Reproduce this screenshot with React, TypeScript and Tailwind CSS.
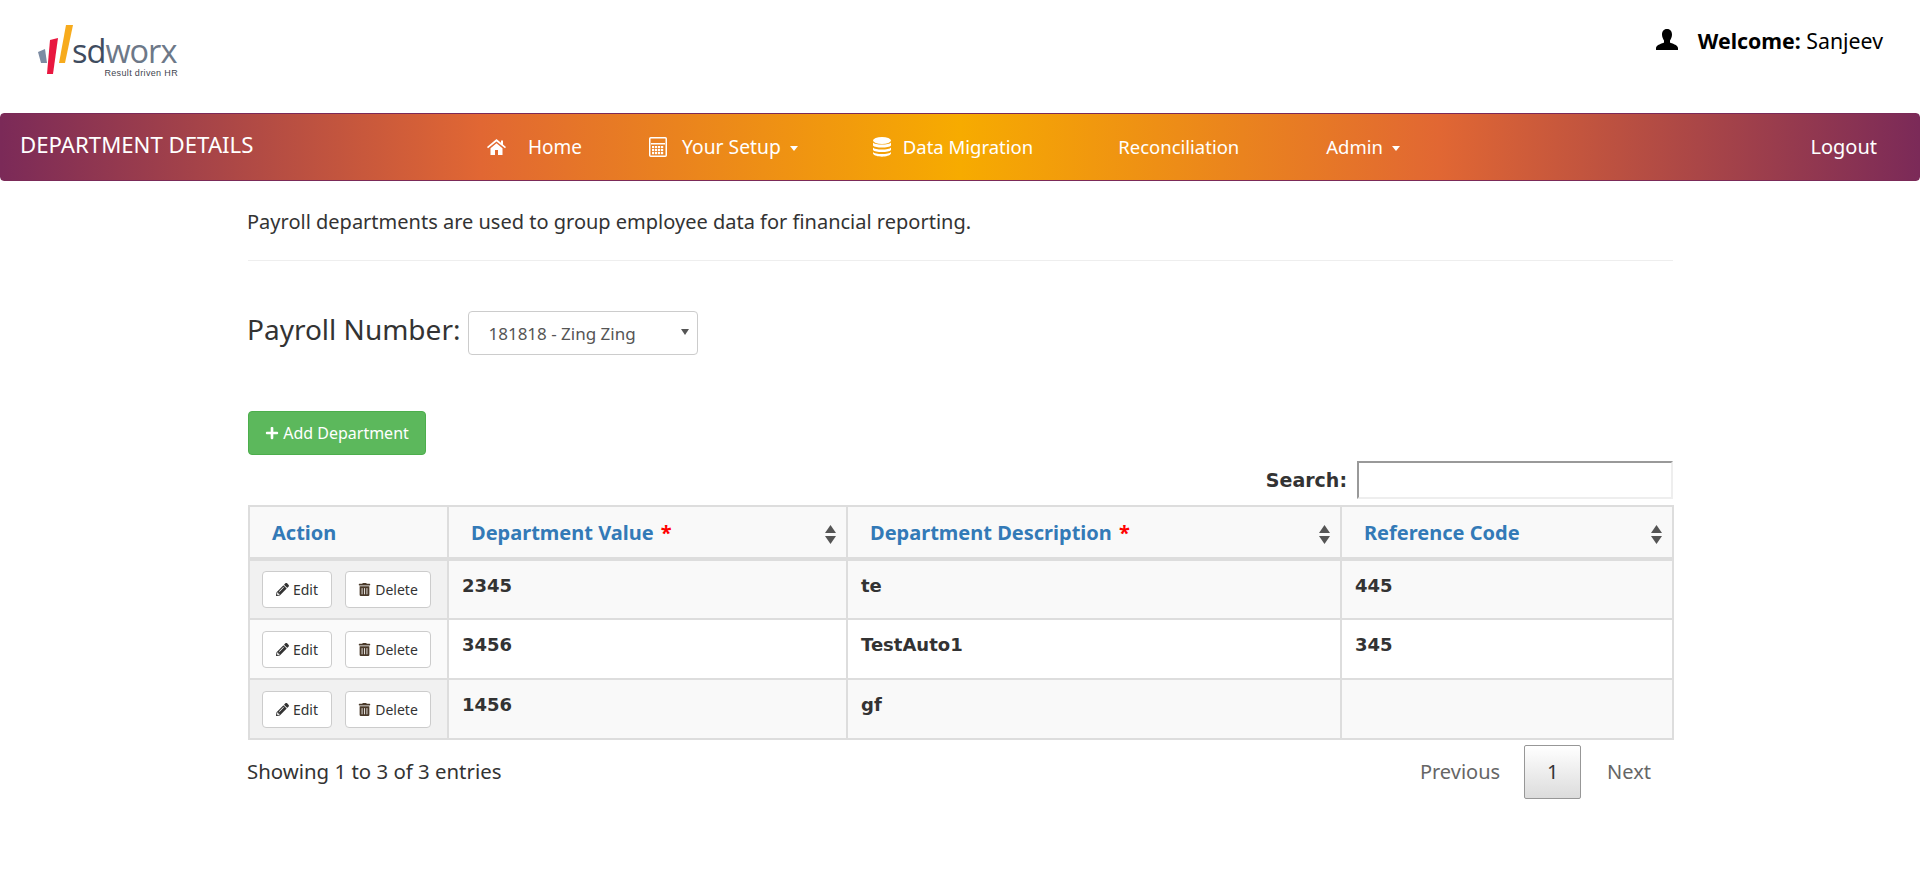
import { FaPlus, FaPencilAlt, FaTrashAlt } from 'react-icons/fa';

const rows = [
  { value: '2345', description: 'te', code: '445' },
  { value: '3456', description: 'TestAuto1', code: '345' },
  { value: '1456', description: 'gf', code: '' },
];

function Logo() {
  return (
    <div className="relative h-[52px] w-[140px]">
      <svg className="absolute left-0 top-0" width="36" height="50" viewBox="0 0 36 50">
        <polygon points="0,27 7,24 9,38 3,38" fill="#7d8ca3" />
        <polygon points="12,15 20,13 15,49 9,49" fill="#e8173f" />
        <polygon points="28,0 35,0 27,38 21,38" fill="#f7ab1d" />
      </svg>
      <span className="absolute left-[34px] top-[13px] font-['Open_Sans',sans-serif] text-[32.5px] leading-[25px] tracking-[-1px] text-[#6d7888]">
        <span className="text-[#3f4c5f]">sd</span>worx
      </span>
      <span className="absolute right-0 top-[43px] font-['Liberation_Sans',sans-serif] text-[9px] leading-[10px] tracking-[0.35px] text-[#3f4550]">
        Result driven HR
      </span>
    </div>
  );
}

function UserIcon() {
  return (
    <svg width="22" height="21" viewBox="0 0 22 21" fill="black" className="mt-[3px]">
      <path d="M11 0 C14.5 0 16 2.6 16 5.6 C16 8 15 10.2 14 11.4 V13.4 C15.5 14.4 22 15.6 22 19 V21 H0 V19 C0 15.6 6.5 14.4 8 13.4 V11.4 C7 10.2 6 8 6 5.6 C6 2.6 7.5 0 11 0 Z" />
    </svg>
  );
}

function HomeIcon() {
  return (
    <svg width="19" height="16" viewBox="0 0 19 16" fill="white" className="mr-[22px]">
      <path d="M9.5 0 L14 3.8 V1.5 H16 V5.5 L19 8 L18 9.2 L9.5 2.4 L1 9.2 L0 8 Z" />
      <path d="M3.5 9.2 L9.5 4.2 L15.5 9.2 V16 H11 V11 H8 V16 H3.5 Z" />
    </svg>
  );
}

function CalcIcon() {
  return (
    <svg width="18" height="20" viewBox="0 0 18 20" className="mr-[15px]">
      <rect x="0.75" y="0.75" width="16.5" height="18.5" rx="1" fill="none" stroke="white" strokeWidth="1.5" />
      <rect x="2" y="6" width="14" height="1.5" fill="white" />
      {[9, 12, 15].map((y) =>
        [3, 6, 9, 12].map((x) => <rect key={`${x}-${y}`} x={x} y={y} width="2.2" height="2.2" fill="white" />),
      )}
    </svg>
  );
}

function DbIcon() {
  return (
    <svg width="18" height="20" viewBox="0 0 18 20" fill="white" className="mr-[12px]">
      <ellipse cx="9" cy="3.5" rx="9" ry="3.5" />
      <path d="M0 5.5 C2 8.3 16 8.3 18 5.5 V8.5 C16 11.3 2 11.3 0 8.5 Z" />
      <path d="M0 10.5 C2 13.3 16 13.3 18 10.5 V13 C16 15.8 2 15.8 0 13 Z" />
      <path d="M0 15 C2 17.8 16 17.8 18 15 V16.5 C16 20.7 2 20.7 0 16.5 Z" />
    </svg>
  );
}

function SortIcon() {
  return (
    <svg width="11" height="19" viewBox="0 0 11 19" fill="#555555" className="absolute right-[10px] top-[18px]">
      <path d="M5.5 0 L11 8 H0 Z" />
      <path d="M0 11 H11 L5.5 19 Z" />
    </svg>
  );
}

function NavItem({ icon, label, caret, className = 'text-[18.5px]' }: { icon?: React.ReactNode; label: string; caret?: boolean; className?: string }) {
  return (
    <a className={`flex items-center whitespace-nowrap leading-[24px] text-white ${className}`}>
      {icon}
      {label}
      {caret && <span className="ml-[9px] mt-[2px] border-x-[4px] border-t-[5px] border-x-transparent border-t-white" />}
    </a>
  );
}

function SortHead({ label, required, width, sortable = true }: { label: string; required?: boolean; width: string; sortable?: boolean }) {
  return (
    <th className={`${width} relative h-[53px] border-2 border-b-4 border-[#dddddd] bg-[#f9f9f9] pl-[22px] pt-[2px] text-left text-[20px] font-bold text-[#337ab7]`}>
      {label}
      {required && <span className="ml-[2px] text-[#ff0000]"> *</span>}
      {sortable && <SortIcon />}
    </th>
  );
}

function ActionButton({ icon, label, width }: { icon: React.ReactNode; label: string; width: string }) {
  return (
    <button className={`${width} flex h-[37px] items-center justify-center gap-[4px] rounded-[4px] border border-[#cccccc] bg-white text-[14px] text-[#333333]`}>
      {icon}
      {label}
    </button>
  );
}

const cellClass = "h-[60px] border-2 border-[#dddddd] pl-[13px] pr-[12px] pb-[9px] font-['DejaVu_Sans',sans-serif] text-[18px] font-bold";

export default function App() {
  return (
    <div className="min-h-[894px] bg-white font-['Noto_Sans',sans-serif] text-[#333333]">
      <header className="flex h-[113px] justify-between pl-[38px] pr-[37px]">
        <div className="pt-[25px]">
          <Logo />
        </div>
        <div className="flex items-start gap-[20px] pt-[26px] text-[21.3px] leading-[30px] text-black">
          <UserIcon />
          <span>
            <b>Welcome:</b> Sanjeev
          </span>
        </div>
      </header>

      <nav className="flex h-[68px] items-center rounded-[4px] border border-[#7b2a58] bg-[linear-gradient(90deg,#7b2a58_0%,#e16733_25%,#f7ab00_50%,#e16733_75%,#7b2a58_100%)] pl-[19px] pr-[42px]">
        <h1 className="mb-[4px] w-[467px] whitespace-nowrap text-[22.2px] leading-[28px] text-white">DEPARTMENT DETAILS</h1>
        <NavItem icon={<HomeIcon />} label="Home" className="text-[19px]" />
        <NavItem icon={<CalcIcon />} label="Your Setup" caret className="ml-[67px] text-[19.3px]" />
        <NavItem icon={<DbIcon />} label="Data Migration" className="ml-[75px] text-[18.5px]" />
        <NavItem label="Reconciliation" className="ml-[85px] text-[18.5px]" />
        <NavItem label="Admin" caret className="ml-[87px] text-[18.5px]" />
        <NavItem label="Logout" className="ml-auto text-[20px]" />
      </nav>

      <main className="ml-[248px] w-[1425px] pt-[28px]">
        <p className="-ml-px text-[20px] leading-[26px]">Payroll departments are used to group employee data for financial reporting.</p>
        <hr className="mt-[25px] border-[#eeeeee]" />

        <div className="mt-[50px] flex items-center">
          <label className="-ml-px mb-[8px] text-[28px] leading-[36px]">Payroll Number:</label>
          <div className="relative ml-[8px] h-[44px] w-[230px] rounded-[4px] border border-[#cccccc] pl-[19px] text-[17px] leading-[44px] text-[#555555]">
            181818 - Zing Zing
            <span className="absolute right-[8px] top-[17px] border-x-[4px] border-t-[6px] border-x-transparent border-t-[#555555]" />
          </div>
        </div>

        <button className="mt-[56px] flex h-[44px] w-[178px] items-center justify-center gap-[4px] rounded-[4px] border border-[#4cae4c] bg-[#5cb85c] text-[16px] text-white">
          <FaPlus className="text-[14px]" />
          Add Department
        </button>

        <div className="mt-[5px] flex h-[40px] items-center justify-end">
          <label className="mr-[10px] font-['DejaVu_Sans',sans-serif] text-[19px] font-bold">Search:</label>
          <input className="h-[38px] w-[316px] border-2 border-b-[#eeeeee] border-l-[#999999] border-r-[#eeeeee] border-t-[#999999] bg-white" />
        </div>

        <table className="mt-[5px] w-[1424px] table-fixed border-collapse">
          <thead>
            <tr>
              <SortHead label="Action" width="w-[199px]" sortable={false} />
              <SortHead label="Department Value" required width="w-[399px]" />
              <SortHead label="Department Description" required width="w-[494px]" />
              <SortHead label="Reference Code" width="w-[332px]" />
            </tr>
          </thead>
          <tbody>
            {rows.map((row, i) => (
              <tr key={row.value} className={i % 2 === 0 ? 'bg-[#f9f9f9]' : 'bg-white'}>
                <td className={`h-[60px] border-2 border-[#dddddd] px-[12px] ${i % 2 === 0 ? 'bg-[#f1f1f1]' : 'bg-[#fafafa]'}`}>
                  <div className="flex gap-[13px]">
                    <ActionButton icon={<FaPencilAlt className="text-[13px]" />} label="Edit" width="w-[70px]" />
                    <ActionButton icon={<FaTrashAlt className="text-[13px] text-[#4a3a2a]" />} label="Delete" width="w-[86px]" />
                  </div>
                </td>
                <td className={cellClass}>{row.value}</td>
                <td className={cellClass}>{row.description}</td>
                <td className={cellClass}>{row.code}</td>
              </tr>
            ))}
          </tbody>
        </table>

        <div className="mt-[5px] flex items-start justify-between">
          <span className="-ml-px mt-[13px] text-[20.4px] leading-[26px]">Showing 1 to 3 of 3 entries</span>
          <div className="flex items-center pr-[22px] text-[20px] text-[#666666]">
            <span>Previous</span>
            <span className="ml-[24px] mr-[26px] flex h-[54px] w-[57px] items-center justify-center rounded-[2px] border border-[#979797] bg-[linear-gradient(180deg,#ffffff_0%,#dcdcdc_100%)] text-[#333333]">1</span>
            <span>Next</span>
          </div>
        </div>
      </main>
    </div>
  );
}
